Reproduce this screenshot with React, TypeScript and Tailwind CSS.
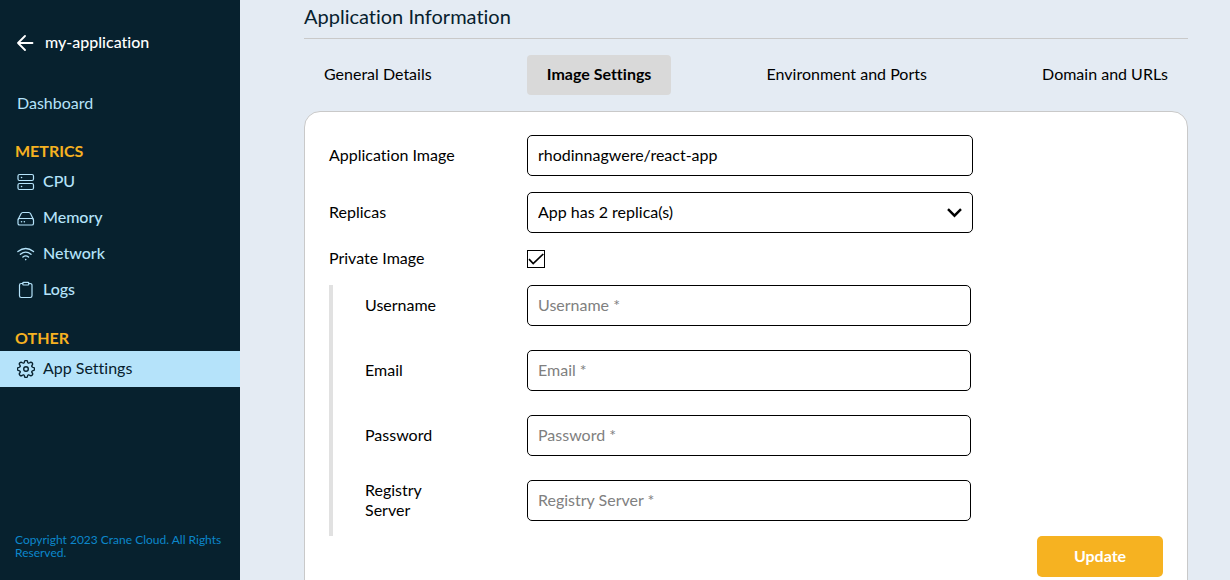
import { useState } from "react";
import type { ReactNode } from "react";

function Icon({ children, size = 18 }: { children: ReactNode; size?: number }) {
  return (
    <svg
      width={size}
      height={size}
      viewBox="0 0 18 18"
      fill="none"
      stroke="currentColor"
      strokeWidth="1.2"
      strokeLinecap="round"
      strokeLinejoin="round"
      aria-hidden="true"
      className="shrink-0"
    >
      {children}
    </svg>
  );
}

const BackIcon = () => (
  <svg width="18" height="18" viewBox="0 0 18 18" fill="none" stroke="currentColor" strokeWidth="1.8" strokeLinecap="round" strokeLinejoin="round" aria-hidden="true">
    <path d="M15.500 9H1M8 2 1 9l7 7" />
  </svg>
);

const CpuIcon = () => (
  <Icon>
    <rect x="1" y="1.500" width="15.500" height="6" rx="1.5" />
    <rect x="1" y="10.500" width="15.500" height="6" rx="1.5" />
    <path d="M4.500 4.500h.1M4.500 13.500h.1" strokeWidth="1.5" />
  </Icon>
);

const MemoryIcon = () => (
  <Icon>
    <path d="M1.200 10.200 4 4.700Q4.600 3.500 5.800 3.500h6q1.200 0 1.800 1.200L16.300 10.200" />
    <rect x="1" y="9.500" width="15.500" height="6.500" rx="1.600" />
    <path d="M4.500 12.800h.1M7.300 12.800h.1" strokeWidth="1.5" />
  </Icon>
);

const NetworkIcon = () => (
  <Icon>
    <path d="M.900 6.500q7.800-6 15.600 0M3.400 9.300q5.300-4.300 10.600 0M5.900 12q2.800-2.200 5.600 0" strokeWidth="1.400" />
    <path d="M8.700 14.500v.1" strokeWidth="1.600" />
  </Icon>
);

const LogsIcon = () => (
  <Icon>
    <path d="M5.800 2.500H4.200A1.700 1.700 0 0 0 2.500 4.200v10.600a1.700 1.700 0 0 0 1.700 1.700h9.100a1.700 1.700 0 0 0 1.700-1.700V4.200a1.700 1.700 0 0 0-1.700-1.700H11.800" />
    <rect x="5.800" y="1.300" width="6" height="2.700" rx="0.800" />
  </Icon>
);

const GearIcon = () => (
  <Icon>
    <path
      strokeWidth="1.400"
      d="M7.500 1.900a1.500 1.500 0 0 1 3 0c.2 1.200 1.200 1.600 2.200.9a1.650 1.650 0 0 1 2.400 2.400c-.7 1-.3 2 .9 2.200a1.600 1.600 0 0 1 0 3.200c-1.200.2-1.600 1.200-.9 2.200a1.650 1.650 0 0 1-2.400 2.400c-1-.7-2-.3-2.200.9a1.500 1.500 0 0 1-3 0c-.2-1.200-1.200-1.600-2.200-.9a1.650 1.650 0 0 1-2.400-2.400c.7-1 .3-2-.9-2.200a1.600 1.600 0 0 1 0-3.200c1.200-.2 1.600-1.200.9-2.200a1.650 1.650 0 0 1 2.400-2.400c1 .7 2 .3 2.200-.9Z"
    />
    <circle cx="9" cy="9" r="2.300" strokeWidth="1.400" />
  </Icon>
);

function NavLink({ icon, label, active = false }: { icon: ReactNode; label: string; active?: boolean }) {
  return (
    <a
      href="#"
      aria-current={active ? "page" : undefined}
      className={
        active
          ? "flex h-9 items-center gap-2 bg-[#b5e3fa] px-[17px] text-[#07212e]"
          : "flex h-9 items-center gap-2 px-[17px] font-medium text-[#b5e3fa]"
      }
    >
      {icon}
      <span className="pb-0.5">{label}</span>
    </a>
  );
}

function Sidebar() {
  return (
    <aside className="flex w-60 shrink-0 flex-col bg-[#07212e] text-base">
      <a href="#" className="mt-[31px] flex h-6 items-center gap-2.5 px-[17px] font-medium text-white">
        <BackIcon />
        <span className="pb-0.5">my-application</span>
      </a>
      <a href="#" className="mt-9 flex h-6 items-center px-[17px] text-[#b5e3fa]">
        Dashboard
      </a>
      <nav className="mt-[26px]" aria-label="Metrics">
        <h2 className="px-[15px] pb-[3px] text-base/5 font-bold text-[#f6b221]">METRICS</h2>
        <NavLink icon={<CpuIcon />} label="CPU" />
        <NavLink icon={<MemoryIcon />} label="Memory" />
        <NavLink icon={<NetworkIcon />} label="Network" />
        <NavLink icon={<LogsIcon />} label="Logs" />
      </nav>
      <nav className="mt-5" aria-label="Other">
        <h2 className="px-[15px] pb-[3px] text-base/5 font-bold text-[#f6b221]">OTHER</h2>
        <NavLink icon={<GearIcon />} label="App Settings" active />
      </nav>
      <p className="mt-auto px-[15px] pb-[21px] text-xs/[13px] text-[#0c87cb]">Copyright 2023 Crane Cloud. All Rights Reserved.</p>
    </aside>
  );
}

const tabs = ["General Details", "Image Settings", "Environment and Ports", "Domain and URLs"];

const fieldClass =
  "h-[41px] w-full rounded-[5px] border border-black bg-white px-2.5 pb-0.5 text-base text-black outline-none placeholder:text-[#808080]";

const credentials = [
  { id: "username", label: "Username", type: "text" },
  { id: "email", label: "Email", type: "email" },
  { id: "password", label: "Password", type: "password" },
  { id: "registry", label: "Registry Server", type: "text" },
];

export default function App() {
  const [tab, setTab] = useState("Image Settings");
  const [isPrivate, setIsPrivate] = useState(true);

  return (
    <div className="flex h-screen overflow-hidden bg-[#e4ebf3] font-[Lato,sans-serif] text-black [font-variant-ligatures:no-common-ligatures]">
      <Sidebar />
      <main className="min-w-0 flex-1 overflow-y-auto pr-[42px] pb-6 pl-16 [scrollbar-width:none]">
        <h1 className="border-b border-[#c9c9c9] pt-0.5 pb-2 text-xl text-[#07212e]">Application Information</h1>
        <div role="tablist" className="mt-4 flex justify-between">
          {tabs.map((name) => (
            <button
              key={name}
              type="button"
              role="tab"
              aria-selected={tab === name}
              onClick={() => setTab(name)}
              className={tab === name ? "h-10 rounded bg-[#d9d9d9] px-5 pb-0.5 font-bold" : "h-10 rounded px-5 pb-0.5"}
            >
              {name}
            </button>
          ))}
        </div>

        <form className="mt-4 rounded-2xl border border-[#c9c9c9] bg-white px-6 pt-[23px] pb-6" onSubmit={(e) => e.preventDefault()}>
          <div className="flex flex-col gap-4">
            <div className="flex items-center">
              <label htmlFor="image" className="w-[198px] shrink-0 pb-0.5">Application Image</label>
              <div className="w-full max-w-[446px]">
                <input id="image" defaultValue="rhodinnagwere/react-app" className={fieldClass} />
              </div>
            </div>
            <div className="flex items-center">
              <label htmlFor="replicas" className="w-[198px] shrink-0 pb-0.5">Replicas</label>
              <div className="relative w-full max-w-[446px]">
                <select id="replicas" defaultValue="2" className={`${fieldClass} appearance-none`}>
                  <option value="1">App has 1 replica(s)</option>
                  <option value="2">App has 2 replica(s)</option>
                  <option value="3">App has 3 replica(s)</option>
                </select>
                <svg width="16" height="10" viewBox="0 0 16 10" fill="none" stroke="currentColor" strokeWidth="2.4" aria-hidden="true" className="pointer-events-none absolute top-4 right-2.5">
                  <path d="M1 1.200 7.500 7.700 14 1.200" />
                </svg>
              </div>
            </div>
            <div className="flex h-5 items-center">
              <label htmlFor="private" className="w-[198px] shrink-0 pb-0.5">Private Image</label>
              <span className="relative flex">
                <input
                  id="private"
                  type="checkbox"
                  checked={isPrivate}
                  onChange={(e) => setIsPrivate(e.target.checked)}
                  className="peer size-[18px] appearance-none border border-black bg-white"
                />
                <svg width="18" height="18" viewBox="0 0 18 18" fill="none" stroke="currentColor" strokeWidth="1.7" aria-hidden="true" className="pointer-events-none invisible absolute inset-0 peer-checked:visible">
                  <path d="M2 9.200 6.200 13.500 16.300 4" />
                </svg>
              </span>
            </div>
            {isPrivate && (
              <div className="flex flex-col gap-6 border-l-4 border-[#e1e1e1] pb-[15px] pl-8">
                {credentials.map(({ id, label, type }) => (
                  <div key={id} className="flex h-[41px] items-center">
                    <label htmlFor={id} className="w-[162px] shrink-0 pr-20 pb-0.5 text-base/5">{label}</label>
                    <div className="w-full max-w-[444px]">
                      <input id={id} type={type} placeholder={`${label} *`} className={fieldClass} />
                    </div>
                  </div>
                ))}
              </div>
            )}
          </div>
          <div className="flex justify-end">
            <button type="submit" className="h-[41px] w-[126px] rounded-[5px] bg-[#f6b221] pb-0.5 font-bold text-white">
              Update
            </button>
          </div>
        </form>
      </main>
    </div>
  );
}
